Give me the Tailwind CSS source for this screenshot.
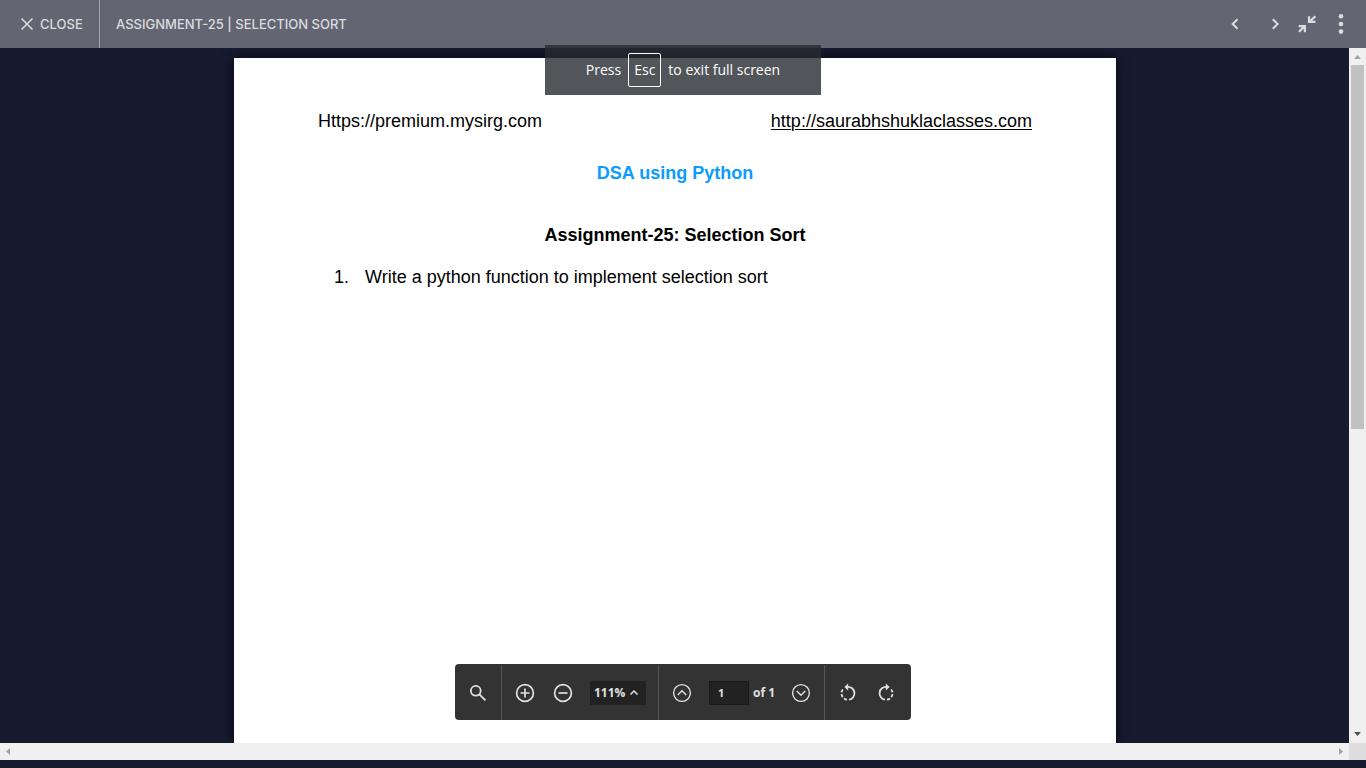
<!DOCTYPE html>
<html lang="en">
<head>
<meta charset="utf-8">
<meta name="viewport" content="width=device-width, initial-scale=1">
<title>Assignment-25 | Selection Sort</title>
<script src="https://cdn.jsdelivr.net/npm/@tailwindcss/browser@4"></script>
</head>
<body class="flex h-screen flex-col overflow-hidden bg-[#161b30] font-['Liberation_Sans',sans-serif]">

<header class="flex h-12 shrink-0 items-center bg-[#636573] font-['Inter',sans-serif] text-sm font-medium text-[#dcdcdf]">
  <button class="flex h-full w-25 items-center gap-1.5 border-r border-[#a0a1aa] pl-5 text-[13px]">
    <svg class="size-3.5" viewBox="0 0 14 14" fill="none" stroke="currentColor" stroke-width="1.5"><path d="M1.5 1.5l11 11M12.5 1.5l-11 11"/></svg>
    CLOSE
  </button>
  <h1 class="pl-4 text-[13px]">ASSIGNMENT-25 | SELECTION SORT</h1>
  <nav class="ml-auto flex items-center pr-[17px]">
    <button aria-label="Previous" class="mr-5 p-1"><svg class="size-3" viewBox="0 0 12 12" fill="none" stroke="currentColor" stroke-width="2"><path d="M8.500 1.200L3.700 6l4.800 4.800"/></svg></button>
    <button aria-label="Next" class="mr-3 p-1"><svg class="size-3" viewBox="0 0 12 12" fill="none" stroke="currentColor" stroke-width="2"><path d="M3.800 1.200L8.600 6l-4.800 4.800"/></svg></button>
    <button aria-label="Exit full screen" class="mr-4"><svg class="size-5" viewBox="0 0 20 20" fill="none" stroke="currentColor" stroke-width="2.200"><path d="M18.400 2.200L12.800 7.400M12 2.200v5.700h6.500M2 17.800L7.300 12.600M1.700 12.100h6.200v6.200"/></svg></button>
    <button aria-label="More options" class="p-1"><svg class="h-5 w-2" viewBox="0 0 8 20" fill="currentColor"><circle cx="4" cy="2.300" r="2.300"/><circle cx="4" cy="10" r="2.300"/><circle cx="4" cy="17.600" r="2.300"/></svg></button>
  </nav>
</header>

<div class="flex min-h-0 flex-1">
  <main class="flex min-w-0 flex-1 justify-center overflow-hidden pt-2.5 pl-px">
    <article class="h-full w-full max-w-[882px] bg-white px-21 pt-[51px] text-lg leading-6 text-black shadow-[0_0_10px_2px_rgba(0,0,0,0.6)]">
      <div class="flex justify-between">
        <span>Https://premium.mysirg.com</span>
        <a href="http://saurabhshuklaclasses.com" class="underline decoration-1 underline-offset-2">http://saurabhshuklaclasses.com</a>
      </div>
      <h2 class="mt-7 text-center font-bold text-[#0b9cff]">DSA using Python</h2>
      <h3 class="mt-[38px] text-center font-bold">Assignment-25: Selection Sort</h3>
      <ol class="mt-[18px] pl-4">
        <li class="flex"><span class="w-[31px]">1.</span><span>Write a python function to implement selection sort</span></li>
      </ol>
    </article>
  </main>
  <div class="flex w-[17px] shrink-0 flex-col bg-[#f0f0f0]" aria-hidden="true">
    <svg class="size-[17px] shrink-0" viewBox="0 0 17 17" fill="#a3a3a3"><path d="M5 11l3.500-4 3.500 4z"/></svg>
    <div class="min-h-0 flex-1 px-0.5"><div class="h-[55%] bg-[#c1c1c1]"></div></div>
    <svg class="size-[17px] shrink-0" viewBox="0 0 17 17" fill="#505050"><path d="M5 6l3.500 4 3.500-4z"/></svg>
  </div>
</div>

<div class="flex h-[17px] shrink-0 bg-[#f0f0f0]" aria-hidden="true">
  <svg class="size-[17px]" viewBox="0 0 17 17" fill="#a3a3a3"><path d="M10 5L6 8.500l4 3.500z"/></svg>
  <svg class="ml-auto size-[17px]" viewBox="0 0 17 17" fill="#a3a3a3"><path d="M7 5l4 3.500-4 3.500z"/></svg>
  <div class="w-[17px] bg-[#dcdcdc]"></div>
</div>
<div class="h-2 shrink-0"></div>

<div role="status" class="absolute top-[45px] left-1/2 flex h-[50px] w-[276px] -translate-x-1/2 justify-center gap-[7px] bg-[#272b30]/80 pt-2 font-['Open_Sans',sans-serif] text-sm leading-[34px] text-white">
  <span>Press</span>
  <kbd class="flex h-[34px] items-center rounded-xs border border-white px-[5px] font-['Open_Sans',sans-serif] text-sm">Esc</kbd>
  <span>to exit full screen</span>
</div>

<div role="toolbar" aria-label="Document controls" class="absolute bottom-12 left-1/2 flex h-14 w-[456px] -translate-x-1/2 items-stretch rounded-sm bg-[#333333] pt-px font-['Open_Sans',sans-serif] text-xs font-bold text-[#e0e0e0]">
  <div class="flex w-[47px] items-center justify-center border-r border-[#555555]">
    <button aria-label="Search"><svg class="size-5" viewBox="0 0 20 20" fill="none" stroke="currentColor" stroke-width="1.800"><circle cx="7.800" cy="7.800" r="4.900"/><path d="M11.400 11.400l6 6"/></svg></button>
  </div>
  <div class="flex w-[157px] items-center border-r border-[#555555] pl-[13px]">
    <button aria-label="Zoom in"><svg class="size-5" viewBox="0 0 20 20" fill="none" stroke="currentColor" stroke-width="1.700"><circle cx="10" cy="10" r="8.400"/><path d="M10 5.500v9M5.500 10h9"/></svg></button>
    <button aria-label="Zoom out" class="ml-[18px]"><svg class="size-5" viewBox="0 0 20 20" fill="none" stroke="currentColor" stroke-width="1.700"><circle cx="10" cy="10" r="8.400"/><path d="M5.500 10h9"/></svg></button>
    <button class="ml-[17px] flex h-6 w-14 items-center gap-1 bg-[#222222] pl-1">111%
      <svg class="size-2.5" viewBox="0 0 10 10" fill="none" stroke="currentColor" stroke-width="1.500"><path d="M1.500 6.500L5 3l3.500 3.500"/></svg>
    </button>
  </div>
  <div class="flex w-[166px] items-center border-r border-[#555555] pl-[13px]">
    <button aria-label="Previous page"><svg class="size-5" viewBox="0 0 20 20" fill="none" stroke="currentColor" stroke-width="1.400"><circle cx="10" cy="10" r="8.400"/><path d="M5.800 12L10 7.800l4.200 4.200"/></svg></button>
    <input aria-label="Page number" value="1" class="ml-[17px] h-6 w-10 border border-[#1a1a1a] bg-[#222222] px-2 text-[11px]">
    <span class="ml-1">of 1</span>
    <button aria-label="Next page" class="ml-4"><svg class="size-5" viewBox="0 0 20 20" fill="none" stroke="currentColor" stroke-width="1.400"><circle cx="10" cy="10" r="8.400"/><path d="M5.800 8l4.200 4.200L14.200 8"/></svg></button>
  </div>
  <div class="flex flex-1 items-center pl-[13px]">
    <button aria-label="Rotate left"><svg class="size-5" viewBox="0 0 20 20" fill="none" stroke="currentColor" stroke-width="1.800"><path d="M9.500 3.800a6.500 6.500 0 0 1 1.500 12.900"/><path d="M9 16.700a6.500 6.500 0 0 1-5.500-7.400q.6-2.400 2.400-3.900" stroke-dasharray="3.200 1.800"/><path d="M10.200.4v7.200L6.300 4z" fill="currentColor" stroke="none"/></svg></button>
    <button aria-label="Rotate right" class="ml-[18px]"><svg class="size-5" viewBox="0 0 20 20" fill="none" stroke="currentColor" stroke-width="1.800"><path d="M10.500 3.800a6.500 6.500 0 0 0-1.500 12.900"/><path d="M11 16.700a6.500 6.500 0 0 0 5.500-7.400q-.6-2.400-2.400-3.900" stroke-dasharray="3.200 1.800"/><path d="M9.800.4v7.200l3.900-3.600z" fill="currentColor" stroke="none"/></svg></button>
  </div>
</div>
</body>
</html>
